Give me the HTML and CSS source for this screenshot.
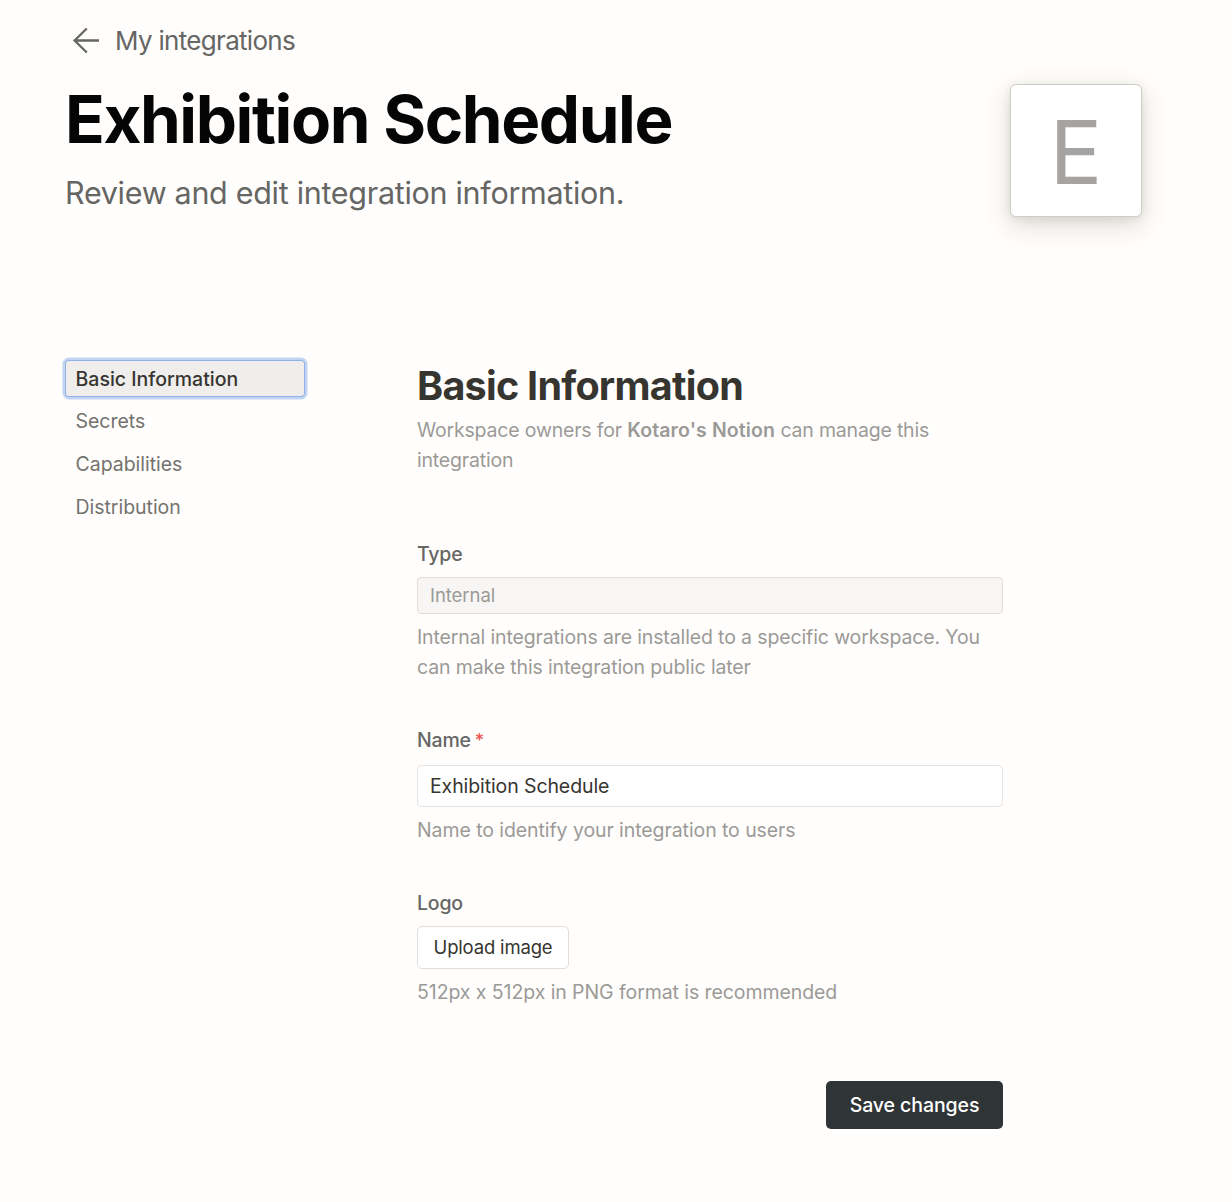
FILE: index.html
```
<!DOCTYPE html>
<html lang="en">
<head>
<meta charset="utf-8">
<title>Exhibition Schedule</title>
<link rel="stylesheet" href="styles.css">
</head>
<body>
<header class="header">
  <div class="intro">
    <a class="back">
      <svg class="back-icon" width="28" height="28" viewBox="0 0 28 28" fill="none" stroke="currentColor" stroke-width="2.3"><path d="M27 13.5H2M14.8 1.5L2.6 13.5L14.8 25.5"/></svg>
      <span>My integrations</span>
    </a>
    <h1 class="title">Exhibition Schedule</h1>
    <p class="subtitle">Review and edit integration information.</p>
  </div>
  <div class="tile">E</div>
</header>
<div class="layout">
  <nav class="nav">
    <a class="nav-item active">Basic Information</a>
    <a class="nav-item">Secrets</a>
    <a class="nav-item">Capabilities</a>
    <a class="nav-item">Distribution</a>
  </nav>
  <main class="form">
    <h2 class="heading">Basic Information</h2>
    <p class="help owners">Workspace owners for <b>Kotaro's Notion</b> can manage this integration</p>
    <section class="field type">
      <div class="label">Type</div>
      <div class="input disabled">Internal</div>
      <p class="help">Internal integrations are installed to a specific workspace. You can make this integration public later</p>
    </section>
    <section class="field name">
      <div class="label">Name<span class="required">*</span></div>
      <div class="input">Exhibition Schedule</div>
      <p class="help short">Name to identify your integration to users</p>
    </section>
    <section class="field logo">
      <div class="label">Logo</div>
      <button class="upload">Upload image</button>
      <p class="help short">512px x 512px in PNG format is recommended</p>
    </section>
    <button class="save">Save changes</button>
  </main>
</div>
</body>
</html>
```
FILE: styles.css
```
* { box-sizing: border-box; }
body {
  margin: 0;
  min-height: 1202px;
  background: #fffefc;
  font: 400 19.5px/30px Inter, "Liberation Sans", sans-serif;
  color: #37352f;
}
h1, h2, p { margin: 0; }
button { font-family: inherit; margin: 0; padding: 0; }

.header {
  display: flex;
  justify-content: space-between;
  align-items: flex-start;
  padding: 26px 90px 0 65px;
}
.back {
  display: flex;
  align-items: center;
  gap: 15px;
  height: 30px;
  padding-left: 7px;
  font-size: 26px;
  letter-spacing: -0.69px;
  color: #666664;
}
.back-icon { flex: none; }
.title {
  margin-top: 24px;
  font-size: 65.5px;
  line-height: 80px;
  font-weight: 700;
  letter-spacing: -1.4px;
  color: #050505;
}
.subtitle {
  margin-top: 13px;
  font-size: 30.5px;
  line-height: 40px;
  letter-spacing: -0.3px;
  color: #666664;
}
.tile {
  display: flex;
  justify-content: center;
  width: 132px;
  height: 133px;
  margin-top: 58px;
  border: 1px solid #cdccc8;
  border-radius: 6px;
  background: #fff;
  box-shadow: 0 8px 26px rgba(55, 40, 15, 0.17), 0 2px 10px rgba(55, 40, 15, 0.09);
  font-size: 88px;
  line-height: 134px;
  color: #a5a4a2;
}

.layout {
  display: flex;
  gap: 112px;
  padding: 143px 229px 0 65px;
}
.nav {
  display: flex;
  flex-direction: column;
  gap: 6px;
  width: 240px;
}
.nav-item {
  height: 37px;
  padding-left: 10.5px;
  line-height: 37px;
  letter-spacing: -0.03px;
  color: #73726e;
}
.nav-item.active {
  border-radius: 4px;
  background: #efeeec;
  box-shadow: inset 0 0 0 1px #8eb1e8, 0 0 0 2.5px #c3d4f2;
  line-height: 38px;
  font-weight: 500;
  letter-spacing: 0;
  color: #37352f;
}

.form {
  display: flex;
  flex: 1;
  flex-direction: column;
  padding-top: 2px;
}
.heading {
  margin-bottom: 5px;
  font-size: 39.5px;
  line-height: 48px;
  font-weight: 700;
  letter-spacing: -0.74px;
}
.help {
  letter-spacing: -0.13px;
  color: #9b9a97;
}
.help.short { letter-spacing: -0.08px; }
.owners { padding-right: 50px; letter-spacing: -0.19px; }
.owners b { font-weight: 600; letter-spacing: 0.12px; }
.field { display: flex; flex-direction: column; }
.type { margin-top: 64px; }
.name, .logo { margin-top: 43px; }
.label { font-weight: 550; letter-spacing: -0.2px; color: #666664; }
.required { margin-left: 4px; font-size: 18px; color: #eb5757; }
.input {
  display: flex;
  align-items: center;
  height: 42px;
  margin: 10px 0 8px;
  padding: 0 12px;
  border: 1px solid #e6e5e3;
  border-radius: 4px;
  background: #fff;
  line-height: 28px;
  letter-spacing: -0.1px;
}
.name .input { margin-top: 9px; }
.input.disabled {
  height: 37px;
  margin-top: 8px;
  padding-bottom: 1px;
  border-color: #dfdedc;
  background: #f7f6f5;
  font-size: 18.5px;
  letter-spacing: -0.06px;
  color: #9b9a97;
}
.upload {
  width: 152px;
  height: 43px;
  margin: 8px 0;
  padding-bottom: 2px;
  border: 1px solid #e0dfdd;
  border-radius: 5px;
  background: #fff;
  font-size: 18.5px;
  letter-spacing: -0.17px;
  color: #37352f;
}
.save {
  align-self: flex-end;
  width: 177px;
  height: 48px;
  margin-top: 74px;
  border: 0;
  border-radius: 5px;
  background: #2f3437;
  font-size: 19.5px;
  font-weight: 550;
  letter-spacing: -0.08px;
  color: #fff;
}
```
